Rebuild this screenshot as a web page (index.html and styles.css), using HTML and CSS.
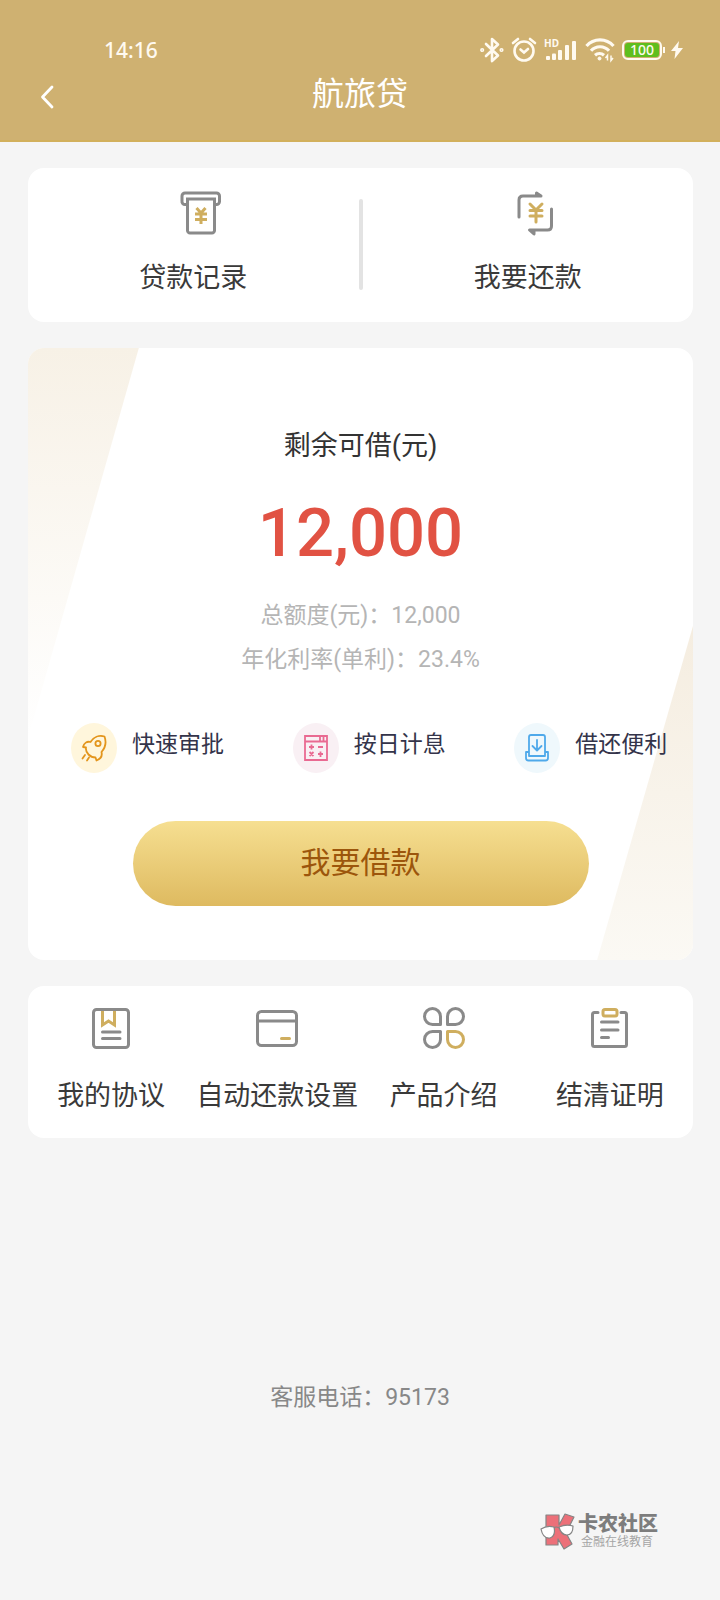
FILE: index.html
```html
<!DOCTYPE html>
<html lang="zh-CN">
<head>
<meta charset="utf-8">
<meta name="viewport" content="width=device-width, initial-scale=1">
<title>航旅贷</title>
<link rel="stylesheet" href="styles.css">
</head>
<body>
<header class="header">
  <div class="status">
    <span class="clock">14:16</span>
    <div class="status-icons">
      <svg width="24" height="26" viewBox="0 0 24 26" fill="none" stroke="#fffaf0" stroke-width="2.600" stroke-linejoin="round" stroke-linecap="round"><path d="M6 7l12 11.500-6 5.500V2l6 5.500L6 19"/><circle cx="2.200" cy="13" r=".8"/><circle cx="21.500" cy="13" r=".8"/></svg>
      <svg width="26" height="26" viewBox="0 0 26 26" fill="none" stroke="#fffaf0" stroke-width="2.600" stroke-linecap="round"><circle cx="13" cy="14" r="9.500"/><path d="M9.500 12.500l3.500 3 4-3.500M2 6l5-4M24 6l-5-4"/></svg>
      <svg width="34" height="26" viewBox="0 0 34 26" fill="#fffaf0"><text class="hd" x="0" y="10">HD</text><rect x="2" y="19" width="4" height="4" rx="1"/><rect x="8" y="16.500" width="4" height="6.500" rx="1"/><rect x="14" y="13" width="4" height="10" rx="1"/><rect x="21" y="8" width="4" height="15" rx="1"/><rect x="28" y="4" width="4" height="19" rx="1"/></svg>
      <svg width="30" height="26" viewBox="0 0 30 26" fill="none" stroke="#fffaf0" stroke-width="3.200"><path d="M1.500 9a18 18 0 0 1 27 0M6 13.800a12 12 0 0 1 18 0M10 18.300a7 7 0 0 1 9 0"/><circle cx="14.500" cy="21.500" r="1.500" fill="#fffaf0" stroke-width="1"/><path d="M22.500 23.500v-5l-2 2.500M26 18.500v5l2-2.500" stroke-width="1.500"/></svg>
      <span class="battery"><span class="battery-level">100</span></span>
      <svg width="12" height="20" viewBox="0 0 12 20" fill="#fffaf0"><path d="M8 1L0 11h4.500L3.500 19 12 8H7z"/></svg>
    </div>
  </div>
  <nav class="nav">
    <button class="back" type="button" aria-label="返回"><svg width="14" height="24" viewBox="0 0 14 24" fill="none" stroke="#fff" stroke-width="2.800" stroke-linecap="round" stroke-linejoin="round"><path d="M12 2L2.500 12 12 22"/></svg></button>
    <h1 class="title">航旅贷</h1>
  </nav>
</header>
<main class="main">
  <section class="card actions">
    <a class="tile" href="#records">
      <span class="tile-icon shifted"><svg width="42" height="44" viewBox="0 0 42 44" fill="none" stroke="#8a8a8a" stroke-width="3"><path d="M7 13.500H5A3 3 0 0 1 2 10V5a3 3 0 0 1 3-3h31.500a3 3 0 0 1 3 3v5.500a3 3 0 0 1-3 3h-2"/><path d="M7.500 8h27v31.500a2.500 2.500 0 0 1-2.500 2.500H10a2.500 2.500 0 0 1-2.500-2.500z"/><path stroke="#cfae5f" d="M16.500 17l4.500 5 4.500-5M21 22v11M15 23h12M15 28.500h12"/></svg></span>
      <span>贷款记录</span>
    </a>
    <span class="divider"></span>
    <a class="tile" href="#repay">
      <span class="tile-icon shifted"><svg width="37" height="45" viewBox="0 0 37 45" fill="none" stroke="#8a8a8a" stroke-width="3" stroke-linecap="round" stroke-linejoin="round"><path d="M2 26V9q0-4 4-4h18L19.500 2v3M34.500 18v17q0 4-4 4H12.500l4.500 4v-4"/><path stroke="#cfae5f" d="M13 13l6 6 6-6M19 19v12M13 19.500h12M13 25h12"/></svg></span>
      <span>我要还款</span>
    </a>
  </section>

  <section class="card loan">
    <svg class="loan-bg" viewBox="0 0 666 612" preserveAspectRatio="none" aria-hidden="true">
      <defs>
        <linearGradient id="fade-left" x1="0" y1="0" x2="0" y2="1"><stop offset="0" stop-color="#f7f1e6"/><stop offset="1" stop-color="#fff"/></linearGradient>
        <linearGradient id="fade-right" x1="0" y1="0" x2="0" y2="1"><stop offset="0" stop-color="#f5ede0"/><stop offset="1" stop-color="#fbf9f4"/></linearGradient>
      </defs>
      <path fill="url(#fade-left)" d="M0 0h111L0 390z"/>
      <path fill="url(#fade-right)" d="M666 278v334h-96z"/>
    </svg>
    <h2 class="loan-title">剩余可借(元)</h2>
    <p class="amount">12,000</p>
    <p class="detail">总额度(元)：12,000</p>
    <p class="detail">年化利率(单利)：23.4%</p>
    <ul class="features">
      <li class="feature"><span class="badge badge-yellow"><svg width="26" height="28" viewBox="0 0 26 28" fill="none" stroke="#e3951c" stroke-width="1.800" stroke-linecap="round" stroke-linejoin="round"><path d="M23.500 2.500C18 1 12.500 3 9.500 8 6 7 3 9 2 13l3 .5c-.5 3 .5 5 2.500 7s4 3 7 3l1 3c4-1.500 6-4.500 5-8.500 4-4.500 5-10 3-15.500z"/><circle cx="17" cy="9.500" r="2.600"/><path d="M4 21l-2.500 3.500M8 23.500l-2 3"/></svg></span><span>快速审批</span></li>
      <li class="feature"><span class="badge badge-pink"><svg width="24" height="26" viewBox="0 0 24 26" fill="none" stroke="#e96a92" stroke-width="1.800"><path d="M1 1h22v24H1zM1 6.500h22M16 1v5M19.500 1v5M5 12h5M7.500 9.500v5M14 12h5M5.500 17l4 4M9.500 17l-4 4M14 19h5M16.500 16.500v1.500M16.500 20v2"/></svg></span><span>按日计息</span></li>
      <li class="feature"><span class="badge badge-blue"><svg width="24" height="28" viewBox="0 0 24 28" fill="none" stroke="#4fa9ea" stroke-width="1.800" stroke-linejoin="round" stroke-linecap="round"><path d="M4 22V3q0-2 2-2h12q2 0 2 2v19zM4 18H1v6q0 2.500 2.500 2.500h17q2.500 0 2.500-2.500v-6h-3M12 6v10M7.500 12l4.500 4.500 4.500-4.500"/></svg></span><span>借还便利</span></li>
    </ul>
    <button class="borrow" type="button">我要借款</button>
  </section>

  <section class="card services">
    <a class="tile" href="#agreements">
      <span class="tile-icon"><svg width="38" height="41" viewBox="0 0 38 41" fill="none" stroke="#8a8a8a" stroke-width="3" stroke-linecap="round"><path stroke="#cfae5f" stroke-linecap="butt" d="M10.500 2v15l6-4 6 4V2"/><rect x="1.500" y="1.500" width="35" height="38" rx="3"/><path d="M10.500 24h17.500M10.500 30.500h17.500"/></svg></span>
      <span>我的协议</span>
    </a>
    <a class="tile" href="#autopay">
      <span class="tile-icon"><svg width="42" height="37" viewBox="0 0 42 37" fill="none" stroke="#8a8a8a" stroke-width="3" stroke-linecap="round"><rect x="1.500" y="1.500" width="39" height="34" rx="4"/><path d="M2 11h38"/><path stroke="#cfae5f" d="M25.500 28.500h8"/></svg></span>
      <span>自动还款设置</span>
    </a>
    <a class="tile" href="#product">
      <span class="tile-icon"><svg width="42" height="42" viewBox="0 0 42 42" fill="none" stroke="#8a8a8a" stroke-width="3" stroke-linejoin="round"><path d="M17.500 17.500V9.500a8 8 0 1 0-8 8z"/><path d="M24.500 17.500V9.500a8 8 0 1 1 8 8z"/><path d="M17.500 24.500v8a8 8 0 1 1-8-8z"/><path stroke="#cfae5f" d="M24.500 24.500v8a8 8 0 1 0 8-8z"/></svg></span>
      <span>产品介绍</span>
    </a>
    <a class="tile" href="#settlement">
      <span class="tile-icon"><svg width="37" height="40" viewBox="0 0 37 40" fill="none" stroke="#8a8a8a" stroke-width="3" stroke-linecap="round"><path d="M7 4.500H3.500a2 2 0 0 0-2 2v30a2 2 0 0 0 2 2h30a2 2 0 0 0 2-2v-30a2 2 0 0 0-2-2H30"/><rect stroke="#cfae5f" x="12" y="1.500" width="14" height="6.500" rx="2"/><path d="M10.500 14h16.500M10.500 22h16.500M10.500 29.500h7"/></svg></span>
      <span>结清证明</span>
    </a>
  </section>
</main>
<footer class="footer">
  <p class="hotline">客服电话：95173</p>
  <div class="brand">
    <svg width="36" height="38" viewBox="0 0 36 38" stroke="#858585" stroke-width="1.200" stroke-linejoin="round"><path fill="#ec7079" d="M6 3h13v10l6-11 9 3-8 16 6 11-8 5-6-10v6H6z"/><path fill="#fff" d="M1 17q6-4 13-2 2 9-4 11-7 1-9-9zM19 15q7-3 14-1 0 9-6 9-6 0-8-8z"/><path fill="none" d="M14 16q2-2 5 0"/></svg>
    <div>
      <p class="brand-name">卡农社区</p>
      <p class="brand-sub">金融在线教育</p>
    </div>
  </div>
</footer>
</body>
</html>
```
FILE: styles.css
```css
* { box-sizing: border-box; }
body {
  margin: 0;
  min-height: 100vh;
  display: flex;
  flex-direction: column;
  background: #f5f5f5;
  color: #3a3a3a;
  font-family: Roboto, "Noto Sans CJK SC", sans-serif;
}
h1, h2, p, ul { margin: 0; padding: 0; font-weight: 400; }
ul { list-style: none; }
a { color: inherit; text-decoration: none; }
button { border: 0; padding: 0; background: none; font-family: inherit; }
svg { display: block; }

.header {
  background: #cfb171;
  border-bottom: 2px solid #d2b05c;
  padding-bottom: 18px;
  color: #fff;
}
.status {
  display: flex;
  justify-content: space-between;
  align-items: center;
  height: 72px;
  padding: 28px 37px 0 104px;
}
.clock {
  font: 500 21px/44px "Noto Sans", sans-serif;
  color: #fffaf0;
}
.status-icons { display: flex; align-items: center; gap: 7px; }
.hd { font: 700 10px "Noto Sans", sans-serif; }
.battery {
  position: relative;
  width: 40px;
  height: 20px;
  margin-right: 2px;
  padding: 1px;
  border: 2px solid #fffaf0;
  border-radius: 6px;
}
.battery::after {
  content: "";
  position: absolute;
  right: -5px;
  top: 5px;
  width: 2px;
  height: 6px;
  background: #fffaf0;
}
.battery-level {
  display: block;
  border-radius: 3px;
  background: #5fbe1e;
  color: #fffaf0;
  font: 500 14px/14px "Noto Sans", sans-serif;
  text-align: center;
}
.nav {
  display: grid;
  grid-template-columns: 1fr auto 1fr;
  height: 50px;
}
.back { width: 94px; height: 50px; display: grid; place-items: center; }
.title { font-size: 32px; line-height: 44px; }

.main {
  display: flex;
  flex-direction: column;
  gap: 26px;
  padding: 26px 27px 0 28px;
}
.card { background: #fff; border-radius: 16px; }
.actions { display: flex; padding: 23px 0 24px; }
.services { display: grid; grid-template-columns: repeat(4, 1fr); padding: 20px 0 22px; }
.tile {
  flex: 1;
  display: flex;
  flex-direction: column;
  align-items: center;
  gap: 23px;
  font-size: 27px;
  line-height: 40px;
  white-space: nowrap;
}
.services .tile { gap: 26px; }
.tile-icon { display: grid; place-items: center; height: 44px; }
.shifted { padding-left: 16px; }
.divider {
  width: 4px;
  margin: 8px 0;
  border-radius: 2px;
  background: #e3e3e3;
}

.loan {
  position: relative;
  overflow: hidden;
  display: flex;
  flex-direction: column;
  align-items: center;
  padding: 78px 0 54px;
}
.loan > * { position: relative; }
.loan .loan-bg { position: absolute; inset: 0; width: 100%; height: 100%; }
.loan-title { font-size: 27px; line-height: 40px; color: #333; }
.amount {
  margin: 27px 0 21px;
  font-size: 67px;
  font-weight: 500;
  line-height: 80px;
  color: #e15243;
}
.detail { font-size: 23px; line-height: 44px; color: #b5b5b5; }
.features {
  align-self: stretch;
  display: grid;
  grid-template-columns: repeat(3, 1fr);
  margin: 41px 0 48px;
}
.feature {
  display: flex;
  gap: 15px;
  padding-left: 43px;
  font-size: 23px;
  line-height: 44px;
  color: #34344a;
  white-space: nowrap;
}
.badge {
  display: grid;
  place-items: center;
  width: 46px;
  height: 50px;
  border-radius: 50%;
}
.badge-yellow { background: #fff6dc; }
.badge-pink { background: #f9f0f4; }
.badge-blue { background: #eff8fc; }
.borrow {
  width: 456px;
  max-width: 90%;
  height: 85px;
  padding-bottom: 8px;
  border-radius: 43px;
  background: linear-gradient(#f6df91, #deba60);
  color: #9c560c;
  font-size: 30px;
}

.footer {
  flex: 1;
  display: flex;
  flex-direction: column;
  justify-content: space-between;
  padding: 240px 62px 50px;
}
.hotline { text-align: center; font-size: 23px; line-height: 40px; color: #888; }
.brand { display: flex; align-items: center; align-self: flex-end; gap: 2px; }
.brand-name { font-size: 20px; line-height: 22px; font-weight: 900; color: #7d7d7d; }
.brand-sub { padding-left: 3px; font-size: 12px; line-height: 14px; color: #a5a5a5; }
```
